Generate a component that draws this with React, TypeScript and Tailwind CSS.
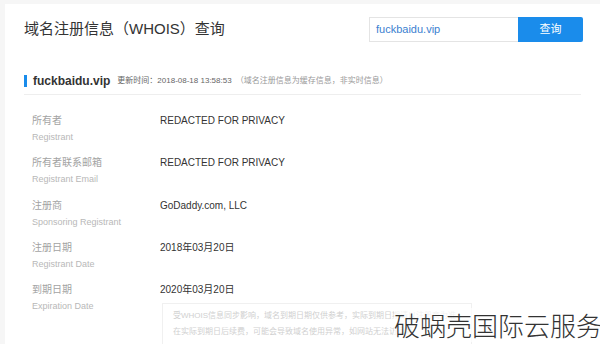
import * as React from "react";

const ROWS = [
  { cn: "所有者", en: "Registrant", value: "REDACTED FOR PRIVACY" },
  { cn: "所有者联系邮箱", en: "Registrant Email", value: "REDACTED FOR PRIVACY" },
  { cn: "注册商", en: "Sponsoring Registrant", value: "GoDaddy.com, LLC" },
  { cn: "注册日期", en: "Registrant Date", value: "2018年03月20日" },
  { cn: "到期日期", en: "Expiration Date", value: "2020年03月20日" },
];

const FONT = "font-['Liberation_Sans','Noto_Sans_CJK_SC',sans-serif]";

export default function App() {
  return (
    <div className={`h-[344px] w-[600px] overflow-hidden bg-[#f6f6f6] pl-[5px] pt-[4px] ${FONT}`}>
      <div className="relative h-full w-full bg-white">
        {/* header */}
        <div className="flex h-[51px] items-center justify-between pl-[19px] pr-[17px]">
          <h1 className="text-[15px] text-[#333]">域名注册信息（WHOIS）查询</h1>
          <div className="flex h-[25px]">
            <div className="flex w-[149px] items-center border border-r-0 border-[#e4e4e4] pl-[6px] text-[11px] text-[#3b7fd0]">
              fuckbaidu.vip
            </div>
            <button className="w-[65px] rounded-r-[2px] bg-[#1a8ceb] text-[11px] text-white">查询</button>
          </div>
        </div>

        {/* section title */}
        <div className="mx-[19px] mt-[17px] flex h-[23px] items-start border-b border-[#eeeeee]">
          <div className="flex items-center">
            <span className="mr-[6px] h-[12px] w-[3px] bg-[#1a8ceb]" />
            <span className="text-[12px] font-bold text-[#333]">fuckbaidu.vip</span>
            <span className="ml-[7px] text-[8px] text-[#666]">更新时间：2018-08-18 13:58:53</span>
            <span className="ml-[4px] text-[8px] text-[#999]">（域名注册信息为缓存信息，非实时信息）</span>
          </div>
        </div>

        {/* rows */}
        <div className="ml-[27px] mt-[19px] flex flex-col">
          {ROWS.map((r) => (
            <div key={r.cn} className="flex h-[42.3px]">
              <div className="w-[128px]">
                <div className="text-[10px] leading-[14px] text-[#a3a3a3]">{r.cn}</div>
                <div className="mt-[3px] text-[9px] leading-[12px] text-[#b8b8b8]">{r.en}</div>
              </div>
              <div className="text-[10px] leading-[14px] text-[#333]">{r.value}</div>
            </div>
          ))}
        </div>

        {/* tip box */}
        <div className="absolute left-[157px] top-[299px] w-[310px] overflow-hidden border border-[#f0f0f0] px-[10px] py-[4px] text-[8px] leading-[16px] text-[#d0d0d0]">
          <div className="whitespace-nowrap">受WHOIS信息同步影响，域名到期日期仅供参考，实际到期日期请以注册商为准</div>
          <div className="whitespace-nowrap">在实际到期日后续费，可能会导致域名使用异常，如网站无法访问等</div>
        </div>

        {/* watermark */}
        <div className="absolute right-[-2px] top-[304px] bg-white/70 text-[26px] leading-[34px] text-[#333] font-['Noto_Sans_CJK_SC',sans-serif] font-light">
          破蜗壳国际云服务
        </div>
      </div>
    </div>
  );
}
